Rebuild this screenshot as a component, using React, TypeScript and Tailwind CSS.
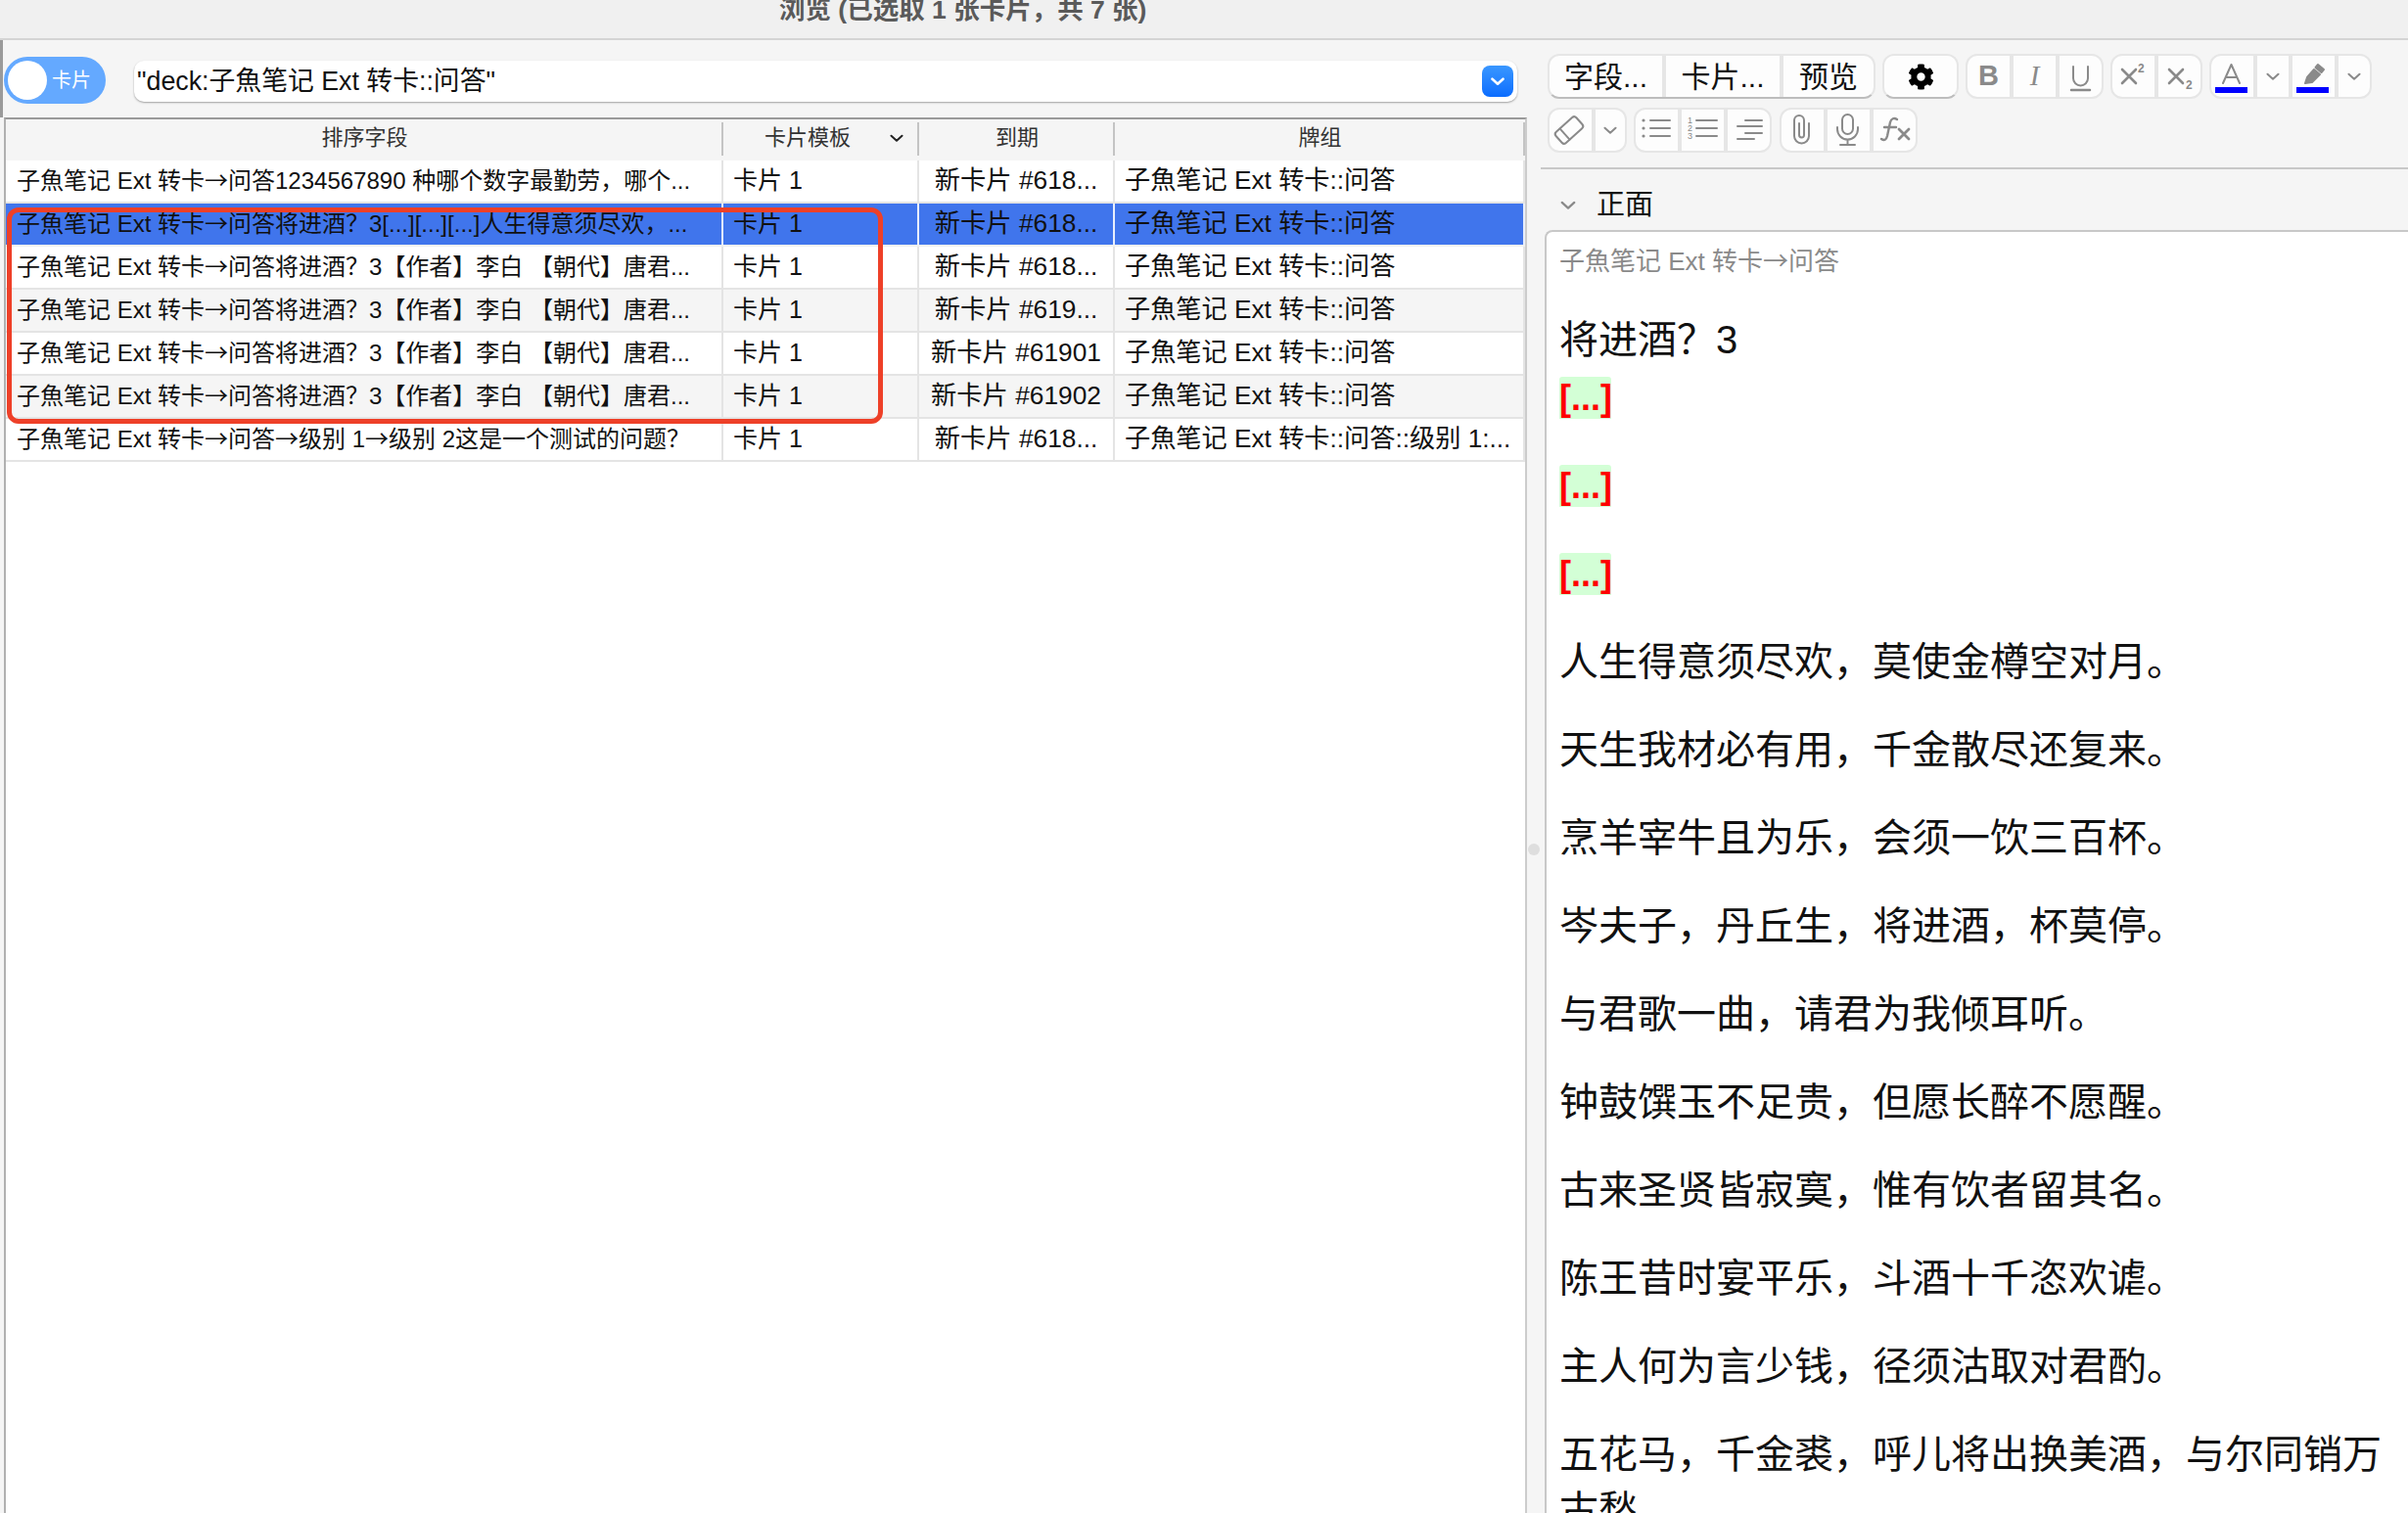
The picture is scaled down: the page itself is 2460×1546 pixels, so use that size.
import React from "react";
import { FaCog } from "react-icons/fa";

const S = "#8a8a8a";

function Chevron({ className = "", color = S, w = 14, sw = 2 }: { className?: string; color?: string; w?: number; sw?: number }) {
  return (
    <svg width={w} height={w * 0.6} viewBox="0 0 14 8" className={className} fill="none" stroke={color} strokeWidth={sw} strokeLinecap="round" strokeLinejoin="round">
      <path d="M1.5 1.5 7 6.5l5.5-5" />
    </svg>
  );
}

function Ico({ children }: { children: React.ReactNode }) {
  return (
    <svg width="43" height="42" viewBox="0 0 43 42" fill="none" stroke={S} strokeWidth="2" strokeLinecap="round" strokeLinejoin="round">
      {children}
    </svg>
  );
}

function Group({ children, raised = false }: { children: React.ReactNode; raised?: boolean }) {
  return (
    <div className={`flex gap-[4px] overflow-hidden rounded-[12px] border-2 bg-[#e6e6e6] border-[#e6e6e6] ${raised ? "border-b-[#bdbdbd]" : ""}`}>
      {children}
    </div>
  );
}

function Btn({ w = "w-[43px]", children }: { w?: string; children: React.ReactNode }) {
  return <div className={`flex h-full items-center justify-center bg-[#fdfdfd] ${w}`}>{children}</div>;
}

const ChevBtn = () => (
  <Btn w="w-[32px]">
    <Chevron />
  </Btn>
);

function Arrowed({ s }: { s: string }) {
  const parts = s.split("→");
  return (
    <>
      {parts.map((p, i) => (
        <React.Fragment key={i}>
          {i > 0 && <span className="font-['Noto_Sans_CJK_SC',sans-serif]">→</span>}
          {p}
        </React.Fragment>
      ))}
    </>
  );
}

const head1 = "子魚笔记 Ext 转卡→问答";
const poem = "子魚笔记 Ext 转卡→问答将进酒？3【作者】李白 【朝代】唐君...";
const deck = "子魚笔记 Ext 转卡::问答";

const rows = [
  { a: "子魚笔记 Ext 转卡→问答1234567890 种哪个数字最勤劳，哪个...", c: "新卡片 #618...", d: deck, bg: "bg-white" },
  { a: "子魚笔记 Ext 转卡→问答将进酒？3[...][...][...]人生得意须尽欢，...", c: "新卡片 #618...", d: deck, bg: "bg-[#4075ec]", sel: true },
  { a: poem, c: "新卡片 #618...", d: deck, bg: "bg-white" },
  { a: poem, c: "新卡片 #619...", d: deck, bg: "bg-[#f5f5f5]" },
  { a: poem, c: "新卡片 #61901", d: deck, bg: "bg-white" },
  { a: poem, c: "新卡片 #61902", d: deck, bg: "bg-[#f5f5f5]" },
  { a: head1 + "→级别 1→级别 2这是一个测试的问题？", c: "新卡片 #618...", d: "子魚笔记 Ext 转卡::问答::级别 1:...", bg: "bg-white" },
];

const lines = [
  "人生得意须尽欢，莫使金樽空对月。",
  "天生我材必有用，千金散尽还复来。",
  "烹羊宰牛且为乐，会须一饮三百杯。",
  "岑夫子，丹丘生，将进酒，杯莫停。",
  "与君歌一曲，请君为我倾耳听。",
  "钟鼓馔玉不足贵，但愿长醉不愿醒。",
  "古来圣贤皆寂寞，惟有饮者留其名。",
  "陈王昔时宴平乐，斗酒十千恣欢谑。",
  "主人何为言少钱，径须沽取对君酌。",
  "五花马，千金裘，呼儿将出换美酒，与尔同销万古愁。",
];

function Cell({ w, sel, className = "", children }: { w: string; sel?: boolean; className?: string; children: React.ReactNode }) {
  return (
    <div className={`flex h-full shrink-0 items-center overflow-hidden whitespace-nowrap border-r-2 text-[#111] ${sel ? "border-[#e8eefc]" : "border-[#e4e4e4]"} ${w} ${className}`}>
      {children}
    </div>
  );
}

function HeadCell({ w, children }: { w: string; children: React.ReactNode }) {
  return (
    <div className={`relative flex h-full shrink-0 items-center justify-center pb-[5px] text-[22px] text-[#333] ${w}`}>
      {children}
      <span className="absolute right-0 top-[3px] h-[34px] w-[2px] bg-[#c4c4c4]" />
    </div>
  );
}

export default function App() {
  return (
    <div className="flex h-[1546px] w-[2460px] flex-col overflow-hidden bg-[#f5f5f5] font-['Liberation_Sans','Noto_Sans_CJK_SC',sans-serif]" lang="zh-CN">
      <div className="flex h-[41px] shrink-0 overflow-hidden border-b-2 border-[#d4d4d4] bg-[#f0f0f0] pl-[796px]">
        <div className="-mt-[4px] text-[26.5px] font-semibold leading-[28px] text-[#5a5a5a]">浏览 (已选取 1 张卡片，共 7 张)</div>
      </div>

      <div className="flex min-h-0 flex-1">
        {/* left panel */}
        <div className="flex w-[1560px] shrink-0 flex-col">
          <div className="flex h-[79px] shrink-0 items-start border-l-[3px] border-[#9a9a9a] pl-[1px] pt-[17px]">
            <div className="flex h-[48px] w-[104px] shrink-0 items-center rounded-full bg-[#64a9ff] pl-[4px]">
              <span className="h-[40px] w-[40px] rounded-full bg-white" />
              <span className="ml-[5px] text-[20px] text-white">卡片</span>
            </div>
            <div className="ml-[29px] mt-[4px] flex h-[42px] w-[1413px] items-center justify-between rounded-[10px] bg-white pl-[3px] pr-[4px] text-[26.8px] text-[#111] shadow-[0_1px_2px_rgba(0,0,0,0.35)]">
              <span>"deck:子魚笔记 Ext 转卡::问答"</span>
              <span className="flex h-[32px] w-[32px] items-center justify-center rounded-[8px] bg-gradient-to-b from-[#3a97ff] to-[#0a6cff]">
                <Chevron color="#ffffff" w={14} sw={2.6} />
              </span>
            </div>
          </div>

          <div className="ml-[4px] flex min-h-0 flex-1 flex-col border-l-2 border-r-2 border-t-2 border-l-[#b0b0b0] border-r-[#cccccc] border-t-[#9a9a9a] bg-white">
            <div className="flex h-[42px] shrink-0 bg-[#f5f5f5]">
              <HeadCell w="w-[733px]">排序字段</HeadCell>
              <HeadCell w="w-[200px]">
                <span className="pr-[28px]">卡片模板</span>
                <Chevron color="#222222" w={14} className="absolute right-[16px] top-[15px]" />
              </HeadCell>
              <HeadCell w="w-[200px]">到期</HeadCell>
              <HeadCell w="w-[419px]">牌组</HeadCell>
            </div>
            {rows.map((r, i) => (
              <div key={i} className={`flex h-[44px] shrink-0 border-b-2 ${r.sel ? "border-[#f0f0f0]" : "border-[#e4e4e4]"} ${r.bg}`}>
                <Cell w="w-[733px]" sel={r.sel} className="pb-[3px] pl-[11px] text-[24px]"><span><Arrowed s={r.a} /></span></Cell>
                <Cell w="w-[200px]" sel={r.sel} className="pl-[10px] text-[25px]">卡片 1</Cell>
                <Cell w="w-[200px]" sel={r.sel} className="justify-center text-[26.3px]">{r.c}</Cell>
                <Cell w="w-[419px]" sel={r.sel} className="pl-[10px] text-[26.2px]">{r.d}</Cell>
              </div>
            ))}
          </div>
        </div>

        {/* splitter */}
        <div className="flex w-[14px] shrink-0 justify-center pt-[821px]">
          <span className="h-[12px] w-[12px] rounded-full bg-[#dedede]" />
        </div>

        {/* right panel */}
        <div className="flex min-w-0 flex-1 flex-col overflow-hidden">
          <div className="flex shrink-0 flex-col gap-[9px] pl-[7px] pt-[14px]">
            <div className="flex h-[46px] gap-[7px]">
              <Group raised>
                <Btn w="w-[115px]"><span className="text-[30px] text-[#111]">字段...</span></Btn>
                <Btn w="w-[116px]"><span className="text-[30px] text-[#111]">卡片...</span></Btn>
                <Btn w="w-[92px]"><span className="text-[30px] text-[#111]">预览</span></Btn>
              </Group>
              <Group raised>
                <Btn w="w-[74px]"><FaCog size={27} color="#000" /></Btn>
              </Group>
              <Group>
                <Btn><span className="text-[29px] font-bold text-[#8a8a8a]">B</span></Btn>
                <Btn><span className="font-['Liberation_Serif',serif] text-[29px] italic text-[#8a8a8a]">I</span></Btn>
                <Btn>
                  <Ico>
                    <path d="M14 11v12a7.5 7.5 0 0 0 15 0V11" />
                    <path d="M12 35h19" strokeWidth="2.5" />
                  </Ico>
                </Btn>
              </Group>
              <Group>
                <Btn>
                  <Ico>
                    <path d="M10 14l14 14M24 14 10 28" strokeWidth="2.6" />
                    <text x="26" y="17" fontSize="12" fontWeight="700" fill={S} stroke="none">2</text>
                  </Ico>
                </Btn>
                <Btn>
                  <Ico>
                    <path d="M11 14l14 14M25 14 11 28" strokeWidth="2.6" />
                    <text x="28" y="34" fontSize="12" fontWeight="700" fill={S} stroke="none">2</text>
                  </Ico>
                </Btn>
              </Group>
              <Group>
                <Btn>
                  <Ico>
                    <path d="M12 28 20.5 9 29 28M15 22h11" />
                    <rect x="4" y="32" width="33" height="6" fill="#0000ff" stroke="none" />
                  </Ico>
                </Btn>
                <ChevBtn />
                <Btn>
                  <Ico>
                    <path d="M26 9l6 5-2.5 3-6-5z" fill={S} />
                    <path d="M22 14l6 5-8 8-7 1 2-6z" fill={S} />
                    <rect x="4" y="32" width="33" height="6" fill="#0000ff" stroke="none" />
                  </Ico>
                </Btn>
                <ChevBtn />
              </Group>
            </div>
            <div className="flex h-[46px] gap-[7px]">
              <Group>
                <Btn>
                  <Ico>
                    <g transform="rotate(-42 20 21)">
                      <rect x="6" y="13.5" width="28" height="15" rx="3" />
                      <path d="M14 13.5v15" />
                    </g>
                  </Ico>
                </Btn>
                <Btn w="w-[30px]"><Chevron /></Btn>
              </Group>
              <Group>
                <Btn>
                  <Ico>
                    <path d="M15 11h20M15 19h20M15 27h20" />
                    <circle cx="8" cy="11" r="1.6" fill={S} stroke="none" />
                    <circle cx="8" cy="19" r="1.6" fill={S} stroke="none" />
                    <circle cx="8" cy="27" r="1.6" fill={S} stroke="none" />
                  </Ico>
                </Btn>
                <Btn>
                  <Ico>
                    <path d="M15 11h21M15 19h21M15 27h21" />
                    <text x="6" y="14" fontSize="9" fill={S} stroke="none">1</text>
                    <text x="6" y="22" fontSize="9" fill={S} stroke="none">2</text>
                    <text x="6" y="30" fontSize="9" fill={S} stroke="none">3</text>
                  </Ico>
                </Btn>
                <Btn>
                  <Ico>
                    <path d="M18 11h17M10 17h25M18 24h17M10 30h17" />
                  </Ico>
                </Btn>
              </Group>
              <div className="ml-[1px] flex">
                <Group>
                  <Btn>
                    <Ico>
                      <path d="M18 14V26a2.5 2.5 0 0 0 5 0V11a5 5 0 0 0-10 0V27a7.5 7.5 0 0 0 15 0V14" />
                    </Ico>
                  </Btn>
                  <Btn>
                    <Ico>
                      <rect x="15" y="5" width="11" height="20" rx="5.5" />
                      <path d="M10 18v2a10.5 10.5 0 0 0 21 0v-2M20.5 31v5M13 36h15" />
                    </Ico>
                  </Btn>
                  <Btn>
                    <Ico>
                      <path d="M24 10c-3-2-6-1-7 3l-3 14c-1 4-3 5-6 3M11 18h12" strokeWidth="2.4" />
                      <path d="M26 20l10 10M36 20 26 30" strokeWidth="2.8" />
                    </Ico>
                  </Btn>
                </Group>
              </div>
            </div>
          </div>

          <div className="mt-[15px] h-[2px] shrink-0 bg-[#c8c8c8]" />

          <div className="flex h-[62px] shrink-0 items-center pl-[20px] pt-[12px]">
            <Chevron w={16} />
            <span className="ml-[21px] text-[29px] text-[#111]">正面</span>
          </div>

          <div className="ml-[4px] min-h-0 flex-1 overflow-hidden rounded-tl-[8px] border-l-2 border-t-2 border-[#c8c8c8] bg-white pl-[13px] pt-[10px] text-[#111]">
            <div className="mb-[34px] h-[38px] text-[26px] leading-[36px] text-[#8a8a8a]"><Arrowed s={head1} /></div>
            <div className="mb-[2px] text-[40px] leading-[57px]">将进酒？3</div>
            {[0, 1, 2].map((i) => (
              <div key={i} className="mb-[33px] flex h-[57px] items-center">
                <span className="block h-[43px] w-[53px] rounded-t-[3px] bg-[#d3ffd6] text-center text-[36px] font-bold leading-[43px] text-[#ff0000]">[...]</span>
              </div>
            ))}
            {lines.map((l) => (
              <p key={l} className="mb-[33px] text-[40px] leading-[57px]">{l}</p>
            ))}
          </div>
        </div>
      </div>

      <div className="pointer-events-none absolute left-[7px] top-[212px] h-[221px] w-[895px] rounded-[12px] border-[5px] border-[#ee4028]" />
    </div>
  );
}
